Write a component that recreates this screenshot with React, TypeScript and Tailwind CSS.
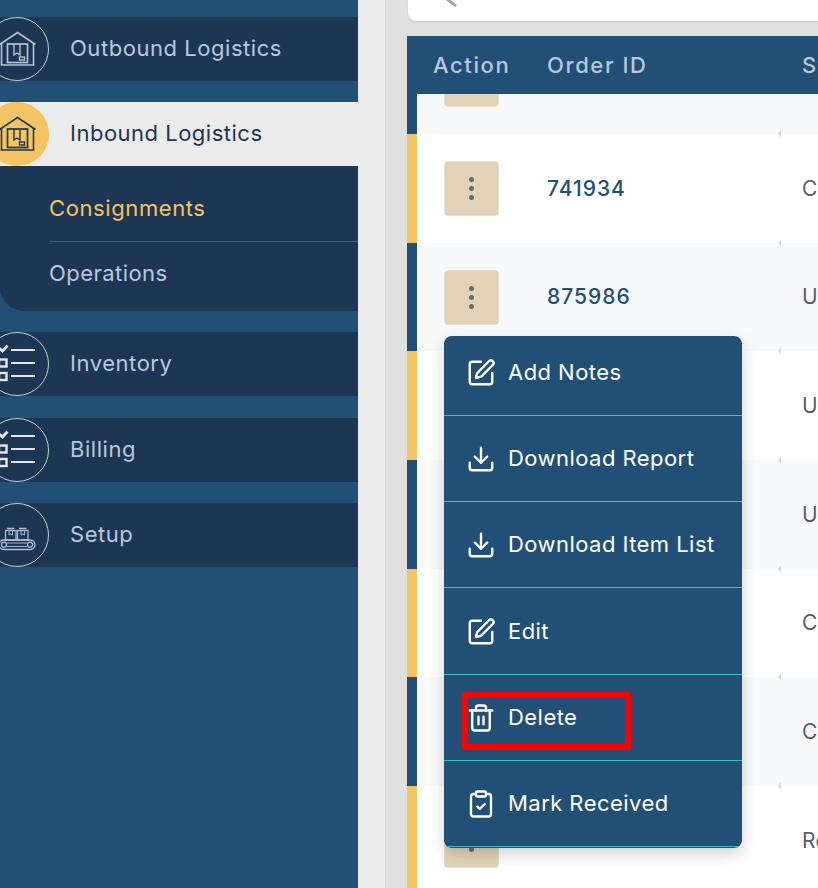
import React from "react";
import { SquarePen, Download, Trash2, ClipboardCheck } from "lucide-react";

const HouseIcon = ({ color }: { color: string }) => (
  <svg viewBox="0 0 64 64" className="w-[64px] h-[64px]" fill="none" stroke={color} strokeWidth="1.4">
    <path d="M14.500 27.500 L32.500 15.500 L50.500 27.500" strokeWidth="1.7" />
    <path d="M16.500 26 V48 H48.500 V26" strokeWidth="1.6" />
    <rect x="22.500" y="27" width="20" height="18.500" strokeWidth="1.7" />
    <path d="M29 27 V38 L32 36 L35 38 V27" />
    <rect x="34.500" y="40" width="5" height="3" />
  </svg>
);

const ListIcon = () => (
  <svg viewBox="0 0 64 64" className="w-[64px] h-[64px]" fill="none" stroke="#e4e8ee" strokeWidth="2.200">
    <path d="M26 18 H50 M26 31 H50 M26 44 H50" />
    <path d="M14 16 L17.500 19 L22.500 13.500" strokeWidth="2.800" />
    <rect x="14" y="27.500" width="7.500" height="7" strokeWidth="2.400" />
    <rect x="14" y="41" width="7.500" height="7" strokeWidth="2.400" />
  </svg>
);

const ConveyorIcon = () => (
  <svg viewBox="0 0 64 64" className="w-[64px] h-[64px]" fill="none" stroke="#b4c3d3" strokeWidth="1.200">
    <rect x="20.500" y="27.500" width="10.500" height="9.500" />
    <rect x="32.500" y="27.500" width="10.500" height="9.500" />
    <path d="M22 25.500 H29.500 M34 25.500 H41.500" strokeWidth="1.400" />
    <path d="M24 27.500 V32 L25.700 31 L27.500 32 V27.500 M36 27.500 V32 L37.700 31 L39.500 32 V27.500" strokeWidth="0.900" />
    <rect x="14" y="37" width="36" height="9.500" rx="4.700" strokeWidth="1.300" />
    <circle cx="19" cy="41.700" r="2.500" />
    <circle cx="45" cy="41.700" r="2.500" />
    <path d="M22 40 H42 M22 43.500 H42" strokeWidth="0.900" />
  </svg>
);

const NavItem = ({ label, icon, className }: { label: string; icon: React.ReactNode; className: string }) => (
  <div className={`h-[64px] flex items-center bg-[#1d3653] ${className}`}>
    <div className="w-[64px] h-[64px] -ml-[15px] shrink-0 rounded-full border border-[#c3cfdc]">
      <div className="-m-px">{icon}</div>
    </div>
    <span className="ml-[21px] pb-[2px] text-[22px] tracking-[0.55px] text-[#b9c9dc]">{label}</span>
  </div>
);

const rows = [
  { id: "", status: "Completed", yellow: false },
  { id: "741934", status: "Completed", yellow: true },
  { id: "875986", status: "Unassigned", yellow: false },
  { id: "902117", status: "Unassigned", yellow: true },
  { id: "913348", status: "Unassigned", yellow: false },
  { id: "746201", status: "Completed", yellow: true },
  { id: "758302", status: "Completed", yellow: false },
  { id: "771452", status: "Received", yellow: true },
];

const Row = ({ id, status, yellow, first }: { id: string; status: string; yellow: boolean; first: boolean }) => (
  <div className={`relative h-[108.67px] shrink-0 flex items-center border-l-[10px] ${yellow ? "bg-white border-[#f5c462]" : "bg-[#f8f9fb] border-[#224f75]"} ${first ? "-mt-[68.5px]" : ""}`}>
    <div className="ml-[27px] w-[55px] h-[55px] shrink-0 rounded-[4px] bg-[#e2d3b8] border border-[#e6dfd0] flex flex-col items-center justify-center gap-[4px]">
      <span className="w-[5px] h-[5px] rounded-full bg-[#6a6a68]" />
      <span className="w-[5px] h-[5px] rounded-full bg-[#6a6a68]" />
      <span className="w-[5px] h-[5px] rounded-full bg-[#6a6a68]" />
    </div>
    <span className="ml-[48px] w-[255px] shrink-0 text-[21px] font-medium tracking-[1px] text-[#224f75]">{id}</span>
    <span className="text-[21px] tracking-[0.3px] whitespace-nowrap text-[#5a5f63]">{status}</span>
    <span className="absolute left-[361px] -top-[4px] w-0 h-0 border-y-[4px] border-y-transparent border-r-[3px] border-r-[#d9dcdf]" />
  </div>
);

const MenuItem = ({ label, icon, className }: { label: string; icon: React.ReactNode; className: string }) => (
  <div className={`flex items-center pl-[23px] gap-[14px] border-b text-white text-[22px] tracking-[0.45px] ${className}`}>
    <span className="w-[27px] flex justify-center">{icon}</span>
    <span>{label}</span>
  </div>
);

export default function App() {
  return (
    <div className="relative w-[818px] h-[888px] overflow-hidden flex bg-[#e0e0e0] font-['Inter',sans-serif]">
      <aside className="w-[358px] shrink-0 bg-[#224f75] pt-[17px] flex flex-col overflow-hidden">
        <NavItem label="Outbound Logistics" icon={<HouseIcon color="#b4c3d3" />} className="" />
        <div className="mt-[21px] h-[64px] flex items-center bg-[#ebebeb]">
          <div className="w-[64px] h-[64px] -ml-[15px] shrink-0 rounded-full bg-[#f5c462]">
            <HouseIcon color="#1d3653" />
          </div>
          <span className="ml-[21px] pb-[2px] text-[22px] tracking-[0.5px] text-[#1d3653]">Inbound Logistics</span>
        </div>
        <div className="h-[145px] bg-[#1d3653] rounded-bl-[24px] pl-[49px] flex flex-col">
          <div className="h-[76px] pt-[9px] flex items-center border-b border-[#2f6488] text-[22px] tracking-[0.6px] text-[#f5c462]">Consignments</div>
          <div className="h-[64px] pb-[2px] flex items-center text-[22px] tracking-[0.45px] text-[#b9c9dc]">Operations</div>
        </div>
        <NavItem label="Inventory" icon={<ListIcon />} className="mt-[21px]" />
        <NavItem label="Billing" icon={<ListIcon />} className="mt-[22px]" />
        <NavItem label="Setup" icon={<ConveyorIcon />} className="mt-[21px]" />
      </aside>

      <div className="w-[28px] shrink-0 bg-[#ebebeb] border-r border-[#d6d6d6]" />

      <main className="flex-1 min-w-0 pl-[21px] flex flex-col">
        <div className="h-[21px] ml-px shrink-0 bg-white rounded-bl-[8px] shadow-[0_1px_2px_rgba(0,0,0,0.12)] overflow-hidden">
          <svg viewBox="0 0 12 8" className="ml-[38px] w-[12px] h-[8px]" fill="none" stroke="#a3aab3" strokeWidth="3">
            <path d="M1 -1 L10 6" />
          </svg>
        </div>
        <div className="mt-[15px] h-[58px] shrink-0 bg-[#224f75] flex items-center text-[22px] tracking-[1.6px] font-medium text-[#b9c9dc] whitespace-nowrap overflow-hidden">
          <span className="ml-[26px] w-[114px] shrink-0">Action</span>
          <span className="w-[255px] shrink-0">Order ID</span>
          <span>Status</span>
        </div>
        <div className="flex-1 min-h-0 flex flex-col overflow-hidden">
          {rows.map((r, i) => (
            <Row key={i} id={r.id} status={r.status} yellow={r.yellow} first={i === 0} />
          ))}
        </div>
      </main>

      <div className="absolute left-[444px] top-[336px] w-[298px] h-[512px] bg-[#224f75] rounded-[8px] shadow-[0_6px_16px_rgba(0,0,0,0.18)] flex flex-col overflow-hidden">
        <MenuItem label="Add Notes" icon={<SquarePen size={30} strokeWidth={1.9} className="shrink-0" />} className="h-[80px] shrink-0 pb-[6px] border-[#5fb7c9]" />
        <MenuItem label="Download Report" icon={<Download size={30} strokeWidth={1.9} className="shrink-0" />} className="h-[86px] shrink-0 border-[#5fb7c9]" />
        <MenuItem label="Download Item List" icon={<Download size={30} strokeWidth={1.9} className="shrink-0" />} className="h-[86px] shrink-0 border-[#5fb7c9]" />
        <MenuItem label="Edit" icon={<SquarePen size={30} strokeWidth={1.9} className="shrink-0" />} className="h-[87px] shrink-0 pt-px border-[#3cbcc4]" />
        <MenuItem label="Delete" icon={<Trash2 size={30} strokeWidth={1.9} className="shrink-0" />} className="h-[86px] shrink-0 border-[#3cbcc4]" />
        <MenuItem label="Mark Received" icon={<ClipboardCheck size={30} strokeWidth={1.9} className="shrink-0" />} className="h-[86px] shrink-0 border-[#3cbcc4]" />
      </div>

      <div className="absolute left-[462px] top-[692px] w-[169px] h-[58px] border-[6px] border-[#ff0000] rounded-[3px]" />
    </div>
  );
}
